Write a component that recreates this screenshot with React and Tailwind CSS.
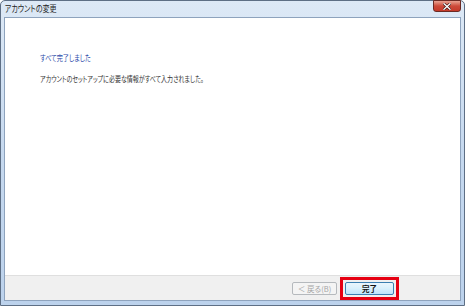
export default function App() {
  const jp = { fontFamily: '"Noto Sans CJK JP", "Noto Sans", sans-serif' };
  return (
    <div className="w-[465px] h-[306px] bg-white">
      <div
        className="w-[465px] h-[306px] flex flex-col border border-[#5e6f85] rounded-t-[5px] bg-gradient-to-b from-[#dde9f6] via-[#c6d9ef] to-[#bcd2ec] px-[3px] pb-[4px]"
        style={jp}
      >
        {/* title bar */}
        <div className="h-[16px] flex items-start justify-between shrink-0">
          <div className="pl-[1px] pt-[2px] text-[9px] leading-[11px] text-[#1e1e1e] [font-feature-settings:'palt'] origin-left scale-x-[0.78] whitespace-nowrap">
            アカウントの変更
          </div>
          <div className="-mt-[1px] w-[28px] h-[12px] rounded-b-[3px] border border-[#6b2a24] bg-gradient-to-b from-[#e8a292] via-[#cc4a3a] to-[#c53a2a] flex items-center justify-center">
            <svg width="8" height="7" viewBox="0 0 8 7">
              <path d="M1 0.8 L7 6.2 M7 0.8 L1 6.2" stroke="#3a1410" strokeWidth="2.6" strokeLinecap="square" />
              <path d="M1 0.8 L7 6.2 M7 0.8 L1 6.2" stroke="#ffffff" strokeWidth="1.4" strokeLinecap="square" />
            </svg>
          </div>
        </div>
        {/* inner panel */}
        <div className="flex-1 flex flex-col border border-[#8ea3bd] bg-white">
          <div className="flex-1 flex flex-col items-start pl-[35px] pt-[33px]">
            <div className="text-[8.5px] leading-[12px] text-[#1f47a8] [font-feature-settings:'palt'] origin-left scale-x-[0.72] whitespace-nowrap">
              すべて完了しました
            </div>
            <div className="mt-[10px] text-[8px] leading-[12px] text-[#333] [font-feature-settings:'palt'] origin-left scale-x-[0.75] whitespace-nowrap">
              アカウントのセットアップに必要な情報がすべて入力されました。
            </div>
          </div>
          <div className="h-[25px] shrink-0 border-t border-[#dfdfdf] bg-[#f0f0f0] flex items-start justify-end pr-[66px] pt-[6px] gap-[8px]">
            <div className="w-[45px] h-[13px] rounded-[2px] border border-[#b5b9bd] bg-[#f4f4f4] flex items-center justify-center text-[7.5px] leading-none text-[#a5a5a5] [font-feature-settings:'palt']">
              ＜ 戻る(B)
            </div>
            <div className="relative">
              <div className="w-[49px] h-[13px] rounded-[2px] border border-[#3c7fb1] bg-gradient-to-b from-[#eaf6fd] via-[#d9f0fc] to-[#bee6fd] flex items-center justify-center text-[7.5px] leading-none font-bold text-[#111]">
                完了
              </div>
              <div className="absolute left-[-5px] top-[-5px] w-[59px] h-[23px] border-[3px] border-[#e60012]" />
            </div>
          </div>
        </div>
      </div>
    </div>
  );
}
